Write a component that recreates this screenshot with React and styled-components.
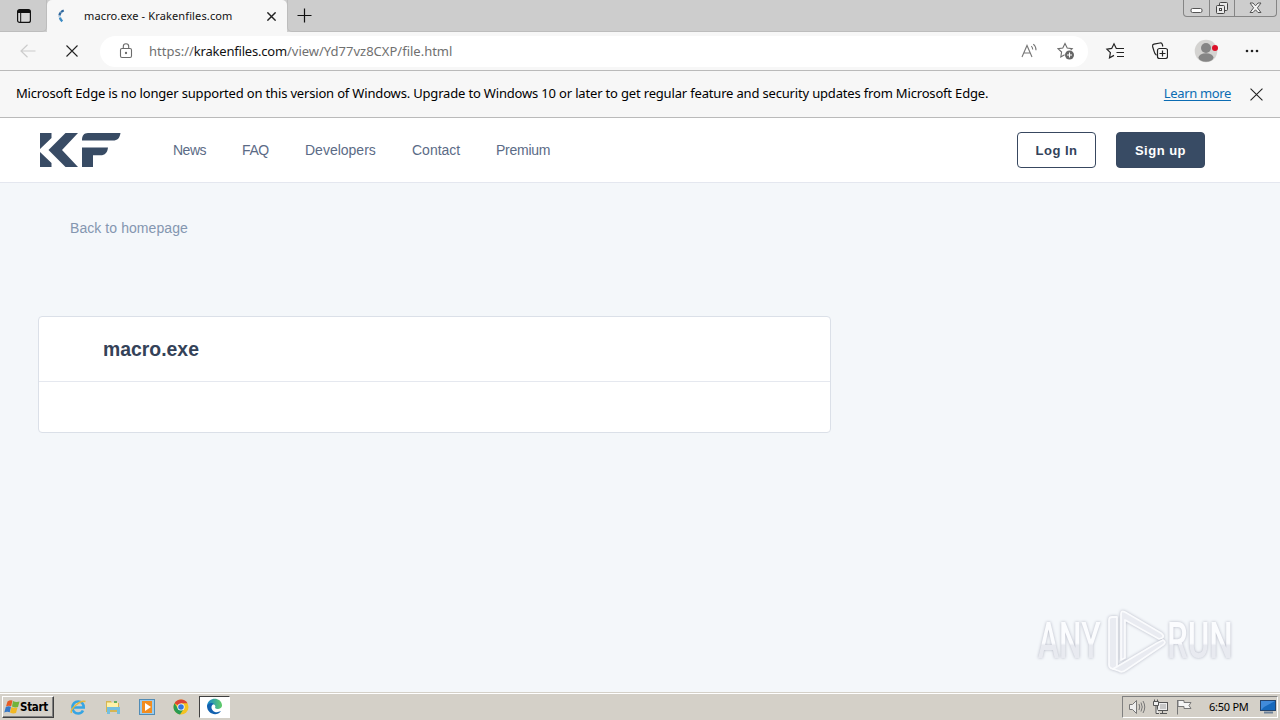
import { styled, createGlobalStyle } from 'styled-components';

const GlobalStyle = createGlobalStyle`
* {
  box-sizing: border-box;
}
body {
  margin: 0;
  overflow: hidden;
  font-family: "Liberation Sans", Arial, sans-serif;
}
svg {
  display: block;
  flex-shrink: 0;
}
`

const Screen = styled.div`
position: relative;
display: flex;
flex-direction: column;
width: 1280px;
height: 720px;
background: #f4f7fa;
`

/* browser window */
const TabStrip = styled.div`
display: flex;
height: 32px;
background: #cdcdcd;
font-family: "Noto Sans", sans-serif;
`
const TabMenu = styled.div`
width: 47px;
height: 32px;
padding: 9px 0 0 17px;
border-radius: 0 0 5px 0;
border-right: 1px solid #bdbdbd;
border-bottom: 1px solid #bdbdbd;
`
const Tab = styled.div`
display: flex;
align-items: center;
width: 240px;
height: 32px;
padding: 0 11px 0 10px;
border-radius: 5px 5px 0 0;
background: #f7f7f7;
`
const TabTitle = styled.span`
flex: 1;
margin: -2px 0 0 17px;
font-size: 11px;
letter-spacing: ${({ $spacing }) => $spacing}px;
color: #111;
white-space: nowrap;
`
const StripRest = styled.div`
display: flex;
flex: 1;
justify-content: space-between;
padding-left: 9px;
border-left: 1px solid #bdbdbd;
border-bottom: 1px solid #bdbdbd;
border-radius: 0 0 0 5px;
`
const NewTab = styled.div`
padding-top: 8px;
`
const WindowButtons = styled.div`
display: flex;
width: 94px;
height: 17px;
margin-right: 3px;
border: 1px solid #858585;
border-top: none;
border-radius: 0 0 4px 4px;
`
const WindowButton = styled.div`
display: flex;
align-items: center;
justify-content: center;
width: ${({ $width }) => $width}px;
border-left: ${({ $first }) => $first ? 'none' : '1px solid #858585'};
`
const Toolbar = styled.div`
display: flex;
align-items: center;
height: 39px;
padding-left: 20px;
background: #f7f7f7;
border-bottom: 1px solid #bababa;
`
const ToolIcon = styled.div`
width: ${({ $width }) => $width}px;
`
const AddressBar = styled.div`
display: flex;
align-items: center;
width: 988px;
height: 31px;
padding: 0 13px 0 18px;
border-radius: 16px;
background: #fff;
font-family: "Noto Sans", sans-serif;
font-size: 13px;
color: #707070;
`
const Url = styled.span`
flex: 1;
margin-left: 15px;
letter-spacing: ${({ $spacing }) => $spacing}px;
white-space: nowrap;

b {
  font-weight: 400;
  letter-spacing: -0.2px;
  color: #111;
}
`
const InfoBar = styled.div`
display: flex;
align-items: center;
height: 47px;
padding: 0 17px 0 16px;
background: #f7f7f7;
border-bottom: 1px solid #bababa;
font-family: "Noto Sans", sans-serif;
font-size: 13px;
color: #000;
white-space: nowrap;
`
const InfoText = styled.span`
flex: 1;
margin-top: -2px;
letter-spacing: ${({ $spacing }) => $spacing}px;
`
const LearnMore = styled.a`
margin: -2px 19px 0 0;
letter-spacing: -0.35px;
color: #0b6cb3;
text-decoration: underline;
text-underline-offset: 2px;
`

/* krakenfiles page */
const SiteHeader = styled.header`
display: flex;
align-items: center;
height: 65px;
padding: 0 75px 0 39px;
background: #fff;
border-bottom: 1px solid #e4e7ef;
`
const Nav = styled.nav`
display: flex;
flex: 1;
gap: 36px;
margin-left: 52px;
`
const NavLink = styled.a`
width: ${({ $width }) => $width}px;
font-size: 14px;
letter-spacing: ${({ $spacing = 0 }) => $spacing}px;
color: #5b6b86;
white-space: nowrap;
`
const HeaderButton = styled.button`
width: ${({ $width }) => $width}px;
height: 36px;
margin-left: 20px;
padding: 1px 0 0;
border: 1px solid #384860;
border-radius: 4px;
background: ${({ $filled }) => $filled ? '#384b64' : '#fff'};
color: ${({ $filled }) => $filled ? '#fff' : '#33435a'};
font-family: "Liberation Sans", Arial, sans-serif;
font-size: 13px;
font-weight: 700;
letter-spacing: 0.5px;
`
const Main = styled.main`
flex: 1;
padding: 37px 0 0 38px;
`
const BackLink = styled.a`
display: block;
height: 96px;
margin-left: 32px;
font-size: 14px;
line-height: 17px;
letter-spacing: 0.07px;
color: #8496b0;
`
const Card = styled.section`
width: 793px;
height: 117px;
background: #fff;
border: 1px solid #dbe0e8;
border-radius: 4px;
`
const CardTitle = styled.h1`
height: 65px;
margin: 0;
padding-left: 64px;
border-bottom: 1px solid #e5e8ef;
font-size: 19.4px;
line-height: 64px;
color: #344258;
`
const Watermark = styled.div`
position: absolute;
left: 1030px;
top: 604px;
`

/* taskbar */
const Taskbar = styled.footer`
display: flex;
align-items: center;
height: 28px;
padding: 2px 2px 2px 2px;
background: #d4d0c8;
border-top: 1px solid #d4d0c8;
box-shadow: inset 0 1px 0 #fff;
`
const StartButton = styled.div`
display: flex;
align-items: center;
width: 52px;
height: 22px;
padding-left: 1px;
border: 1px solid;
border-color: #fff #404040 #404040 #fff;
box-shadow: inset -1px -1px 0 #808080;
font-family: "DejaVu Sans Condensed", "DejaVu Sans", sans-serif;
font-size: 11.5px;
font-weight: 700;
letter-spacing: -0.3px;
color: #000;
`
const QuickLaunch = styled.div`
display: flex;
flex: 1;
align-items: center;
gap: 18px;
padding-left: 16px;
`
const ActiveTask = styled.div`
display: flex;
align-items: center;
justify-content: center;
width: 31px;
height: 22px;
margin-left: -8px;
border: 1px solid;
border-color: #404040 #fff #fff #404040;
background: #fff;
`
const Tray = styled.div`
display: flex;
align-items: center;
width: 156px;
height: 22px;
padding-left: 5px;
border: 1px solid;
border-color: #808080 #fff #fff #808080;
`
const TrayIcon = styled.div`
width: 24px;
`
const Clock = styled.span`
flex: 1;
margin-top: -1px;
padding-left: 9px;
font-family: "Noto Sans", sans-serif;
font-size: 11px;
letter-spacing: -0.25px;
color: #000;
white-space: nowrap;
`

function Cross({ size, width = 1.2, color = '#222' }) {
  return (
    <svg width={size} height={size} viewBox="0 0 12 12" stroke={color} strokeWidth={width} fill="none">
      <path d="M.5 .5 11.5 11.5M11.5 .5 .5 11.5" />
    </svg>
  );
}

function BrowserTabs() {
  return (
    <TabStrip>
      <TabMenu>
        <svg width="14" height="14" viewBox="0 0 14 14">
          <rect x=".6" y=".6" width="12.8" height="12.8" rx="2" fill="#d8d8d8" stroke="#111" strokeWidth="1.2" />
          <path d="M1 1h12v3H1z" fill="#111" />
          <path d="M3.700 4v9" stroke="#111" />
        </svg>
      </TabMenu>
      <Tab>
        <svg width="10" height="14" viewBox="0 0 10 14" fill="none">
          <path d="M6.8 1.5C4.300 2.400 2.400 4.500 2.400 7.200" stroke="#2d679e" strokeWidth="2.300" strokeDasharray="3.200 .5" />
          <path d="M2.900 8.500c.2 1.500 1 2.600 2.400 3.800" stroke="#3b8bc4" strokeWidth="2.300" />
        </svg>
        <TabTitle $spacing={0.13}>macro.exe - Krakenfiles.com</TabTitle>
        <Cross size={9} width={1.9} />
      </Tab>
      <StripRest>
        <NewTab>
          <svg width="15" height="15" stroke="#111" strokeWidth="1.2">
            <path d="M7.5 .5v14M.5 7.5h14" />
          </svg>
        </NewTab>
        <WindowButtons>
          <WindowButton $width={25} $first>
            <svg width="13" height="16"><rect x="1" y="8.5" width="11" height="4" rx="1.5" fill="#fff" stroke="#555" /></svg>
          </WindowButton>
          <WindowButton $width={25}>
            <svg width="14" height="14" fill="#e8e8e8" stroke="#444">
              <rect x="4.5" y="1.5" width="8" height="8" rx="1" />
              <rect x="1.5" y="4.5" width="8" height="8" rx="1" />
              <rect x="4.5" y="7.5" width="2" height="2" fill="#fff" />
            </svg>
          </WindowButton>
          <WindowButton $width={42}>
            <svg width="13" height="12" viewBox="0 0 13 12">
              <path d="M1 1h3l2.5 2.8L9 1h3L8.4 5.8 12 10.5H9L6.5 7.8 4 10.5H1l3.6-4.7z" fill="#f5f5f5" stroke="#555" />
            </svg>
          </WindowButton>
        </WindowButtons>
      </StripRest>
    </TabStrip>
  );
}

function BrowserToolbar() {
  return (
    <Toolbar>
      <ToolIcon $width={46}>
        <svg width="16" height="14" fill="none" stroke="#ccc" strokeWidth="1.2"><path d="M15.5 7H1M7.5 .8 1 7l6.5 6.2" /></svg>
      </ToolIcon>
      <ToolIcon $width={34}><Cross size={12} width={1.1} /></ToolIcon>
      <AddressBar>
        <svg width="16" height="16" fill="none" stroke="#6b6b6b" strokeWidth="1.1">
          <rect x="2.5" y="5.5" width="11" height="9" rx="1.5" />
          <path d="M5.3 5.3V3.5a2.7 2.7 0 0 1 5.4 0v1.8" />
          <circle cx="8" cy="10" r=".6" fill="#6b6b6b" />
        </svg>
        <Url $spacing={0}>https://<b>krakenfiles.com</b>/view/Yd77vz8CXP/file.html</Url>
        <ToolIcon $width={36}>
          <svg width="18" height="16" fill="none" stroke="#777" strokeWidth="1.1">
            <path d="M1 14 6 2.5 11 14M2.8 10h6.4M10.3 3.2c1 .9 1.4 2 1.4 3.3M12.3 1.2c1.8 1.5 2.8 3.5 2.7 6" />
          </svg>
        </ToolIcon>
        <svg width="18" height="18" fill="none" stroke="#6c6c6c" strokeWidth="1.1">
          <path d="M7.6 12.8 3.8 15l.8-5L1 6.7l4.8-.6L8 1.5l2.2 4.6 5 .6-1.5 1.5" />
          <circle cx="12.5" cy="13" r="4.5" fill="#666" stroke="none" />
          <path d="M12.5 10.5v5M10 13h5" stroke="#fff" />
        </svg>
      </AddressBar>
      <ToolIcon $width={44}>
        <svg width="36" height="18" fill="none" stroke="#222" strokeWidth="1.2">
          <path d="M30 6.500h-1.700L26 1.800l-2.300 4.600-4.800.7 3.500 3.500-.9 5.200 4.500-2.400" />
          <path d="M29 6.500h7M28.500 10.500h7.500M29 14.500h7" />
        </svg>
      </ToolIcon>
      <ToolIcon $width={44}>
        <svg width="36" height="18" fill="none" stroke="#222" strokeWidth="1.2">
          <rect x="25.5" y="6.5" width="10" height="10" rx="2" />
          <path d="M30.5 8.5v6M27.5 11.5h6M24.500 13.200c-1.700-1-2.100-2.200-2.500-4L20.600 4.500c-.3-1.300.2-2 1.300-2.300L28 1c1.200-.2 2 .3 2.300 1.300l.5 2.200" />
        </svg>
      </ToolIcon>
      <ToolIcon $width={48}>
        <svg width="46" height="24">
          <circle cx="30" cy="12" r="11.300" fill="#d4d3d1" />
          <circle cx="30" cy="9" r="5" fill="#858585" />
          <ellipse cx="30" cy="18.500" rx="7.500" ry="4.300" fill="#858585" />
          <circle cx="39" cy="9" r="3" fill="#dc1028" />
        </svg>
      </ToolIcon>
      <svg width="36" height="4" fill="#222">
        <circle cx="23" cy="2" r="1.300" /><circle cx="28" cy="2" r="1.300" /><circle cx="33" cy="2" r="1.300" />
      </svg>
    </Toolbar>
  );
}

function KrakenLogo() {
  return (
    <svg width="82" height="36" fill="#384b64">
      <path d="M1 1h11.500v5L1 17zM1 20l11.500 11v4H1zM26.500 1H39L23 18l16 17H26.500L9.500 18z" />
      <path d="M49 1h32.500c-.8 5.200-3 7.500-7.500 7.500H43C43 3.700 44.800 1 49 1zM43 15.500h26c-.6 5.200-3 7.800-7.500 7.800H54V35H43z" />
    </svg>
  );
}

function AnyRunLogo() {
  return (
    <svg width="220" height="80" style={{ filter: 'drop-shadow(0 0 1.5px #b4b7c4)' }}>
      <defs>
        <linearGradient id="fade" x1="0" y1="0" x2="0" y2="1">
          <stop offset="0.54" stopColor="#fbfcfe" />
          <stop offset="0.58" stopColor="#e8eaf0" />
        </linearGradient>
      </defs>
      <g fill="url(#fade)" fontFamily="Roboto" fontSize="50" fontWeight="500">
        <text transform="translate(8 54) scale(.635 1)">ANY</text>
        <text transform="translate(137 54) scale(.66 1)">RUN</text>
      </g>
      <g fill="#e9ebf1" stroke="#fafbfd" strokeWidth="1.8" strokeLinejoin="round">
        <path d="M85 13h-3q-3 0-3 3v45q0 3 4 4l4-2V13z" />
        <path d="M91 56V10q0-4 4-2l36 21q4 3 1 5l-3 1-34-19v38z" />
        <path d="M83 65 127 39l6-3q4 2 0 5L96 66q-4 3-7 1z" />
      </g>
    </svg>
  );
}

function TaskbarRow() {
  return (
    <Taskbar>
      <StartButton>
        <svg width="16" height="16">
          <path d="M3.500 2.500Q6 .5 8.500 1.500L7.200 7.200Q4.500 6 2 7.500z" fill="#e65b24" />
          <path d="M9 2q3 1.500 6.500 .5L14 8q-3 1-6-.5z" fill="#72b33a" />
          <path d="M1.800 8Q4.500 6.700 7 7.700l-1.200 5.500Q3 12 .3 13.500z" fill="#3678c7" />
          <path d="M7.500 8q3 1.500 6 .5L12 14q-3 1-6-.5z" fill="#f2b824" />
        </svg>
        Start
      </StartButton>
      <QuickLaunch>
        <svg width="17" height="16" fill="none">
          <path d="M13 11.500c-1 2-2.600 3-4.800 3C4.800 14.500 2.500 12 2.500 8.500s2.300-6 5.700-6 5.500 2.500 5.500 6H4" stroke="#36a5e3" strokeWidth="2.600" />
          <path d="M1.500 14C-.5 10.500 10 .5 15.500 2.500" stroke="#e8b83d" strokeWidth="1.400" />
        </svg>
        <svg width="16" height="16">
          <path d="M1 2h5l1 2h7v9H1z" fill="#d6b653" />
          <path d="M2 3.500h11v6H2z" fill="#fff2a8" />
          <path d="M2 8h13v7h-3v-4H5v4H2z" fill="#74bfdf" />
          <path d="M9 2h3v2H9z" fill="#62ae62" />
        </svg>
        <svg width="16" height="16">
          <rect x=".5" y=".5" width="15" height="15" fill="#9acbed" stroke="#528cb5" />
          <rect x="3" y="2" width="10" height="12" fill="#f28d20" />
          <path d="m6 4 6 4-6 4z" fill="#fff" />
        </svg>
        <svg width="16" height="16">
          <circle cx="8" cy="8" r="7.500" fill="#f4c322" />
          <path d="M8 8 1.500 4.250A7.500 7.500 0 0 1 14.500 4.250H8z" fill="#dc4437" />
          <path d="M1.500 4.250A7.500 7.500 0 0 0 7 15.450L11 9.500 5 9.500z" fill="#299b54" />
          <circle cx="8" cy="8" r="3.600" fill="#fff" /><circle cx="8" cy="8" r="2.800" fill="#3477df" />
        </svg>
        <ActiveTask>
          <svg width="17" height="17">
            <defs>
              <linearGradient id="edge" x1="0" x2="1">
                <stop offset="0" stopColor="#1687cf" /><stop offset="1" stopColor="#62cd66" />
              </linearGradient>
            </defs>
            <path d="M1 8C2-1.500 15-1.500 16 7c.5 4-5 5-7 3 1.500-3-2-5-5-3.500C2 7.500 1 10 1 8z" fill="url(#edge)" />
            <path d="M1 8c1-3 5-4 7-2-4 1-3 7 1 8 2 .5 4 0 6-1-4 6-14 3-14-5z" fill="#1261af" />
          </svg>
        </ActiveTask>
      </QuickLaunch>
      <Tray>
        <TrayIcon>
          <svg width="18" height="16" fill="#eee" stroke="#777">
            <path d="M1.500 5.500h3l4-4v13l-4-4h-3z" />
            <path d="M11 5q1.500 3 0 6M13 3.500q2.500 4.500 0 9M15 2q3.500 6 0 12" fill="none" />
          </svg>
        </TrayIcon>
        <TrayIcon>
          <svg width="17" height="16" fill="#eee" stroke="#555">
            <rect x="5.500" y="3.500" width="10" height="8" /><path d="M8 14.500h7M10.500 12v2M1.500 2.500h5v4h-5zM2.500 .5v2M5.500 .5v2M4 7v7.500h3" />
            <path d="M8 5h6v5H8z" fill="#c7c7c7" stroke="none" />
          </svg>
        </TrayIcon>
        <TrayIcon>
          <svg width="17" height="16" fill="#f5f5f5" stroke="#777">
            <path d="M1.500 1v14.500" /><path d="M2 1.500h6v2h7l-2 3 2 3H8v-2H2z" />
          </svg>
        </TrayIcon>
        <Clock>6:50 PM</Clock>
        <svg width="17" height="14">
          <rect x=".5" y=".5" width="15" height="10" fill="#1769bc" stroke="#25446d" />
          <path d="M1 1h14L4 7 1 10z" fill="#418bda" /><path d="M4 12.500h9" stroke="#6d8198" strokeWidth="2" />
        </svg>
      </Tray>
    </Taskbar>
  );
}

export default function App() {
  return (
    <Screen>
      <GlobalStyle />
      <BrowserTabs />
      <BrowserToolbar />
      <InfoBar>
        <InfoText $spacing={-0.173}>
          Microsoft Edge is no longer supported on this version of Windows. Upgrade to Windows 10 or later to get regular feature and security updates from Microsoft Edge.
        </InfoText>
        <LearnMore>Learn more</LearnMore>
        <Cross size={13} width={1} />
      </InfoBar>
      <SiteHeader>
        <KrakenLogo />
        <Nav>
          <NavLink $width={33} $spacing={-0.5}>News</NavLink>
          <NavLink $width={27} $spacing={-0.4}>FAQ</NavLink>
          <NavLink $width={71}>Developers</NavLink>
          <NavLink $width={48}>Contact</NavLink>
          <NavLink $width={54} $spacing={-0.25}>Premium</NavLink>
        </Nav>
        <HeaderButton $width={79}>Log In</HeaderButton>
        <HeaderButton $width={89} $filled>Sign up</HeaderButton>
      </SiteHeader>
      <Main>
        <BackLink>Back to homepage</BackLink>
        <Card>
          <CardTitle>macro.exe</CardTitle>
        </Card>
      </Main>
      <Watermark><AnyRunLogo /></Watermark>
      <TaskbarRow />
    </Screen>
  );
}
